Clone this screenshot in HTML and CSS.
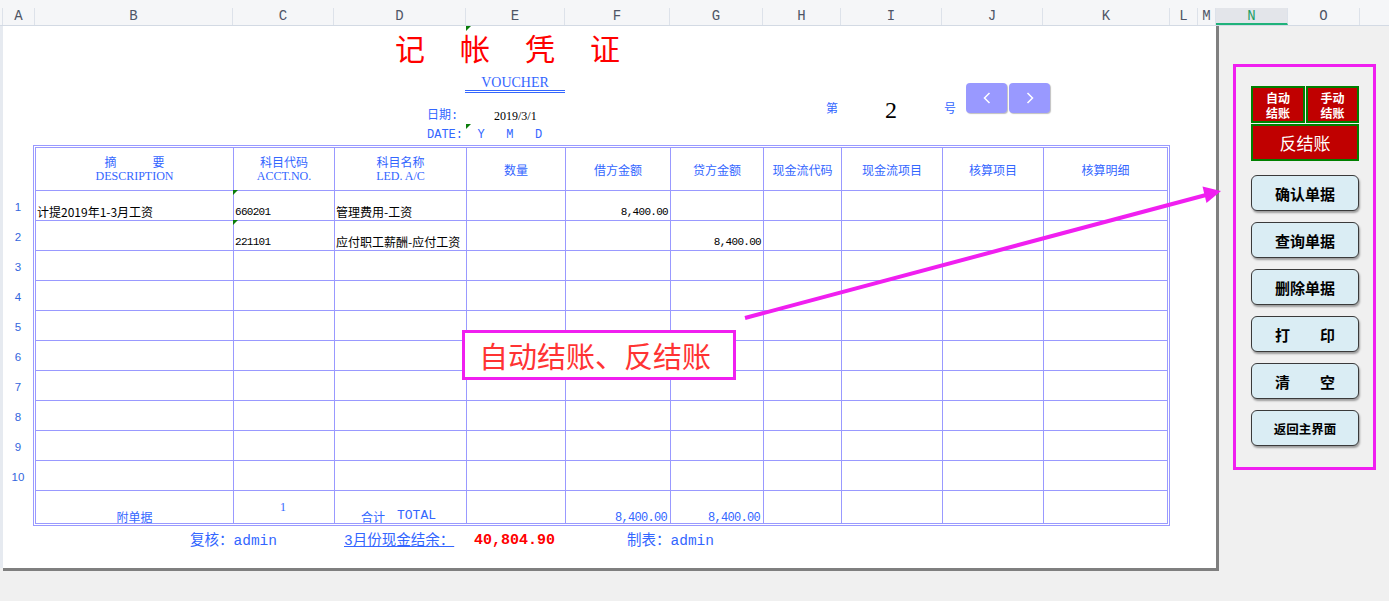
FILE: index.html
```html
<!DOCTYPE html>
<html lang="zh-CN">
<head>
<meta charset="utf-8">
<title>记帐凭证</title>
<link rel="stylesheet" href="styles.css">
</head>
<body>
<div class="colbar">
  <div class="ch c-stub"></div>
  <div class="ch c-a">A</div>
  <div class="ch c-b">B</div>
  <div class="ch c-c">C</div>
  <div class="ch c-d">D</div>
  <div class="ch c-e">E</div>
  <div class="ch c-f">F</div>
  <div class="ch c-g">G</div>
  <div class="ch c-h">H</div>
  <div class="ch c-i">I</div>
  <div class="ch c-j">J</div>
  <div class="ch c-k">K</div>
  <div class="ch c-l">L</div>
  <div class="ch c-m">M</div>
  <div class="ch c-n sel">N</div>
  <div class="ch c-o">O</div>
  <div class="ch c-rest"></div>
</div>

<div class="main">
  <div class="edge"></div>
  <div class="sheet">
    <i class="tri t1"></i><i class="tri t2"></i>
    <div class="title">记帐凭证</div>
    <div class="info">
      <div class="left">
        <div class="voucher">VOUCHER</div>
        <div class="date1"><span class="lbl">日期:</span><span class="dv">2019/3/1</span></div>
        <div class="date2">DATE:  Y   M   D</div>
      </div>
      <div class="pager">
        <span class="pz">第</span>
        <span class="pn">2</span>
        <span class="pz hao">号</span>
        <div class="nav">
          <div class="navbtn"><svg width="12" height="16" viewBox="0 0 12 16"><polyline points="8.5,3 3.5,8 8.5,13" fill="none" stroke="#fff" stroke-width="1.5"/></svg></div>
          <div class="navbtn"><svg width="12" height="16" viewBox="0 0 12 16"><polyline points="3.5,3 8.5,8 3.5,13" fill="none" stroke="#fff" stroke-width="1.5"/></svg></div>
        </div>
      </div>
    </div>

    <div class="tablewrap">
      <div class="rownums">
        <div>1</div><div>2</div><div>3</div><div>4</div><div>5</div>
        <div>6</div><div>7</div><div>8</div><div>9</div><div>10</div>
      </div>
      <div class="frame">
        <div class="grid">
          <div class="h h2"><span>摘　　　要</span><span class="en">DESCRIPTION</span></div>
          <div class="h h2"><span>科目代码</span><span class="en">ACCT.NO.</span></div>
          <div class="h h2"><span>科目名称</span><span class="en">LED. A/C</span></div>
          <div class="h">数量</div>
          <div class="h">借方金额</div>
          <div class="h">贷方金额</div>
          <div class="h">现金流代码</div>
          <div class="h">现金流项目</div>
          <div class="h">核算项目</div>
          <div class="h">核算明细</div>

          <div class="d">计提2019年1-3月工资</div>
          <div class="d num cm">660201</div>
          <div class="d">管理费用-工资</div>
          <div></div>
          <div class="d r num">8,400.00</div>
          <div></div><div></div><div></div><div></div><div></div>

          <div></div>
          <div class="d num cm">221101</div>
          <div class="d">应付职工薪酬-应付工资</div>
          <div></div><div></div>
          <div class="d r num">8,400.00</div>
          <div></div><div></div><div></div><div></div>

          <div></div><div></div><div></div><div></div><div></div><div></div><div></div><div></div><div></div><div></div>
          <div></div><div></div><div></div><div></div><div></div><div></div><div></div><div></div><div></div><div></div>
          <div></div><div></div><div></div><div></div><div></div><div></div><div></div><div></div><div></div><div></div>
          <div></div><div></div><div></div><div></div><div></div><div></div><div></div><div></div><div></div><div></div>
          <div></div><div></div><div></div><div></div><div></div><div></div><div></div><div></div><div></div><div></div>
          <div></div><div></div><div></div><div></div><div></div><div></div><div></div><div></div><div></div><div></div>
          <div></div><div></div><div></div><div></div><div></div><div></div><div></div><div></div><div></div><div></div>
          <div></div><div></div><div></div><div></div><div></div><div></div><div></div><div></div><div></div><div></div>

          <div class="t c">附单据</div>
          <div class="t mid">1</div>
          <div class="t c tot">合计　<span class="tt">TOTAL</span></div>
          <div></div>
          <div class="t r num">8,400.00</div>
          <div class="t r num">8,400.00</div>
          <div></div><div></div><div></div><div></div>
        </div>
      </div>
    </div>

    <div class="foot">
      <span class="f1">复核：admin</span>
      <span class="f2">3月份现金结余：</span>
      <span class="f3">40,804.90</span>
      <span class="f4">制表：admin</span>
    </div>
  </div>

  <div class="side">
    <div class="panel">
      <div class="redgrid">
        <div class="rb">自动<br>结账</div>
        <div class="rb">手动<br>结账</div>
        <div class="rb wide">反结账</div>
      </div>
      <div class="btns">
        <div class="btn">确认单据</div>
        <div class="btn">查询单据</div>
        <div class="btn">删除单据</div>
        <div class="btn">打　　印</div>
        <div class="btn">清　　空</div>
        <div class="btn small">返回主界面</div>
      </div>
    </div>
  </div>
</div>

<svg class="arrow" width="1389" height="601" viewBox="0 0 1389 601">
  <line x1="745" y1="318" x2="1206" y2="195" stroke="#f01ff0" stroke-width="4"/>
  <polygon points="1221,191 1202.5,186.5 1206.5,203" fill="#f01ff0"/>
</svg>
<div class="callout">自动结账、反结账</div>
</body>
</html>
```

FILE: styles.css
```css
* { box-sizing: border-box; }
html, body { margin: 0; padding: 0; }
body {
  width: 1389px;
  height: 601px;
  background: #f0f0f0;
  font-family: "Noto Sans CJK SC", "Liberation Sans", sans-serif;
  position: relative;
  overflow: hidden;
}

/* column header bar */
.colbar {
  display: flex;
  height: 26px;
  background: #f5f6f8;
  border-bottom: 1px solid #d3dae4;
}
.ch {
  margin-top: 8px;
  height: 17px;
  line-height: 17px;
  text-align: center;
  border-right: 1px solid #dde2ea;
  font-family: "Liberation Mono", monospace;
  font-size: 14px;
  color: #4e5566;
}
.c-stub { width: 3px; }
.c-a { width: 32px; }
.c-b { width: 198px; }
.c-c { width: 101px; }
.c-d { width: 132px; }
.c-e { width: 99px; }
.c-f { width: 105px; }
.c-g { width: 93px; }
.c-h { width: 78px; }
.c-i { width: 101px; }
.c-j { width: 101px; }
.c-k { width: 127px; }
.c-l { width: 28px; }
.c-m { width: 18px; }
.c-n { width: 72px; }
.c-o { width: 72px; }
.c-rest { flex: 1; border-right: 0; }
.ch.sel {
  background: #e3e5ea;
  color: #1f9e64;
  border-bottom: 2px solid #1fb27a;
}

/* main area */
.main { display: flex; align-items: flex-start; }
.edge { width: 3px; height: 542px; background: #e6eaf0; }
.sheet {
  position: relative;
  width: 1216px;
  height: 545px;
  background: #fff;
  border-right: 3px solid #7f7f7f;
  border-bottom: 3px solid #7f7f7f;
}

.tri {
  position: absolute;
  width: 0; height: 0;
  border-top: 5px solid #0a7d0a;
  border-right: 5px solid transparent;
}
.t1 { left: 463px; top: 0; }
.t2 { left: 463px; top: 98px; }

.title {
  height: 40px;
  padding: 6px 0 0 392px;
  font-size: 30px;
  line-height: 30px;
  letter-spacing: 35px;
  color: #ff0000;
  white-space: nowrap;
}

.info { display: flex; height: 79px; }
.left {
  width: 143px;
  margin-left: 424px;
  display: flex;
  flex-direction: column;
}
.voucher {
  margin: 9px 0 0 38px;
  width: 100px;
  text-align: center;
  font-family: "Liberation Serif", serif;
  font-size: 14px;
  line-height: 15px;
  color: #3366ff;
  border-bottom: 3px double #3366ff;
}
.date1 {
  margin-top: 15px;
  display: flex;
  height: 16px;
  line-height: 16px;
  font-size: 12px;
}
.date1 .lbl { width: 67px; color: #3366ff; font-family: "Liberation Mono", "Noto Sans CJK SC", monospace; }
.date1 .dv { font-family: "Liberation Serif", serif; color: #000; }
.date2 {
  margin-top: 3px;
  height: 16px;
  line-height: 16px;
  font-family: "Liberation Mono", monospace;
  font-size: 12px;
  color: #3366ff;
  white-space: pre;
}

.pager { display: flex; align-items: flex-start; margin-left: 256px; }
.pz {
  width: 12px;
  margin-top: 34px;
  font-size: 12px;
  line-height: 16px;
  color: #3366ff;
}
.pn {
  width: 12px;
  margin: 32px 0 0 47px;
  font-family: "Liberation Serif", serif;
  font-size: 24px;
  line-height: 24px;
  color: #000;
}
.hao { margin-left: 47px; }
.nav { display: flex; gap: 2px; margin: 17px 0 0 10px; }
.navbtn {
  width: 41px;
  height: 30px;
  border-radius: 4px;
  background: #9999ff;
  box-shadow: 1px 1px 1px rgba(0,0,0,0.25);
  display: flex;
  align-items: center;
  justify-content: center;
}

/* table */
.tablewrap { display: flex; }
.rownums {
  width: 30px;
  padding-top: 47px;
  font-family: "Liberation Sans", sans-serif;
  font-size: 11.5px;
  color: #3366dd;
}
.rownums div { height: 30px; line-height: 30px; text-align: center; }
.frame {
  border: 1px solid #9999ff;
  padding: 1px;
}
.grid {
  display: grid;
  grid-template-columns: 198px 101px 132px 99px 105px 93px 78px 101px 101px 124px;
  grid-template-rows: 43px repeat(10, 30px) 33px;
  border-top: 1px solid #9999ff;
  border-left: 1px solid #9999ff;
}
.grid > div {
  border-right: 1px solid #9999ff;
  border-bottom: 1px solid #9999ff;
  position: relative;
}
.h {
  display: flex;
  flex-direction: column;
  align-items: center;
  justify-content: center;
  color: #3366ff;
  font-size: 12px;
  line-height: 15px;
}
.h .en { font-family: "Liberation Serif", serif; font-size: 12px; }
.d {
  display: flex;
  align-items: flex-end;
  padding: 0 1px 1px 1px;
  font-size: 12px;
  line-height: 14px;
  color: #000;
  white-space: nowrap;
}
.num {
  font-family: "Liberation Mono", monospace;
  font-size: 11px;
  letter-spacing: -0.7px;
}
.r { justify-content: flex-end; padding-right: 2px; }
.cm::before {
  content: "";
  position: absolute;
  left: -1px;
  top: -1px;
  width: 0; height: 0;
  border-top: 5px solid #0a7d0a;
  border-right: 5px solid transparent;
}
.t {
  display: flex;
  align-items: flex-end;
  color: #3366ff;
  font-size: 12px;
  line-height: 13px;
  white-space: nowrap;
}
.t.c { justify-content: center; }
.t.tot { padding-right: 4px; }
.t.mid { justify-content: center; align-items: center; font-family: "Liberation Serif", serif; padding-right: 2px; }
.t.r { line-height: 10px; padding-bottom: 0; padding-right: 3px; }
.tt { font-family: "Liberation Mono", monospace; font-size: 13px; position: relative; top: -1px; }

/* footer */
.foot {
  display: flex;
  margin-top: 7px;
  padding-left: 187px;
  height: 16px;
  line-height: 16px;
  font-family: "Liberation Mono", "Noto Sans CJK SC", monospace;
  font-size: 14.5px;
  color: #3366ff;
  white-space: nowrap;
}
.f1 { width: 154px; }
.f2 { width: 130px; text-decoration: underline; }
.f3 { width: 153px; color: #ff0000; font-weight: bold; font-size: 15px; }

/* right side */
.side { flex: 1; padding: 38px 0 0 14px; }
.panel {
  width: 143px;
  height: 406px;
  border: 3px solid #f01ff0;
  padding: 19px 0 0 15px;
}
.redgrid {
  display: grid;
  grid-template-columns: 54px 53px;
  grid-template-rows: 37px 37px;
  gap: 1px;
  width: 108px;
}
.rb {
  background: #c00000;
  border: 2px solid #008000;
  color: #fff;
  display: flex;
  align-items: center;
  justify-content: center;
  text-align: center;
  font-size: 12px;
  font-weight: bold;
  line-height: 15px;
}
.rb.wide { grid-column: 1 / 3; font-size: 17px; font-weight: normal; }
.btns { margin-top: 14px; }
.btn {
  width: 108px;
  height: 36px;
  margin-bottom: 11px;
  border: 1.5px solid #3a3a3a;
  border-radius: 6px;
  background: #daedf4;
  box-shadow: 1px 2px 2px rgba(0,0,0,0.35);
  display: flex;
  align-items: center;
  justify-content: center;
  font-size: 15px;
  font-weight: bold;
  color: #000;
}
.btn.small { font-size: 12.5px; }

/* overlays */
.arrow { position: absolute; left: 0; top: 0; pointer-events: none; }
.callout {
  position: absolute;
  left: 462px;
  top: 330px;
  width: 274px;
  height: 50px;
  border: 3px solid #f01ff0;
  background: #fff;
  color: #ff3333;
  font-size: 29px;
  line-height: 44px;
  text-align: center;
  padding-right: 8px;
}
```
